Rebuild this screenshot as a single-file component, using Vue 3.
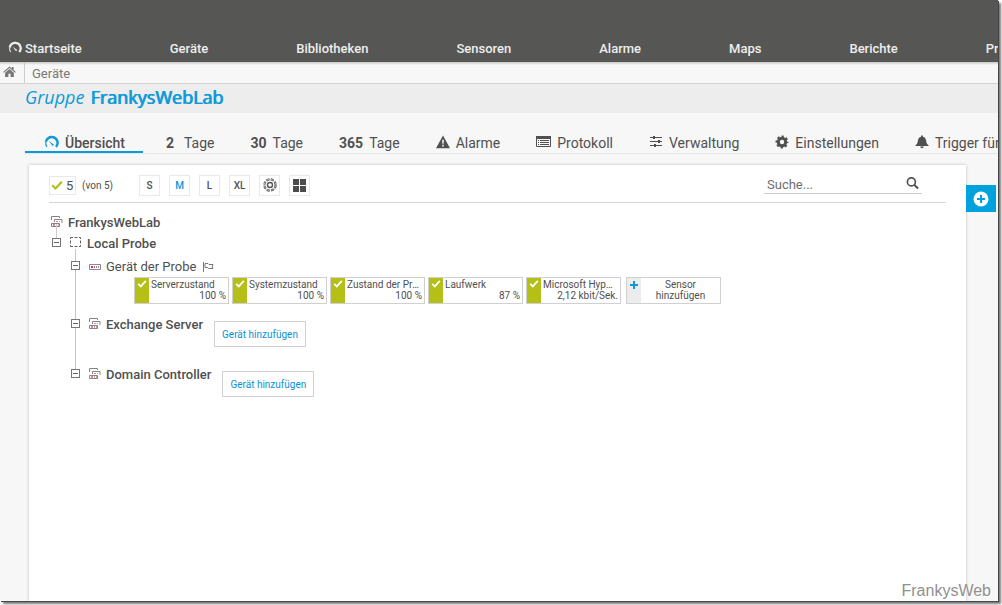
<script setup>
import { ref } from 'vue'

const nav = ['Startseite', 'Geräte', 'Bibliotheken', 'Sensoren', 'Alarme', 'Maps', 'Berichte', 'Protokolle']
const tabs = [
  { icon: 'gauge', label: 'Übersicht', active: true },
  { num: '2', label: 'Tage' },
  { num: '30', label: 'Tage' },
  { num: '365', label: 'Tage' },
  { icon: 'warn', label: 'Alarme' },
  { icon: 'log', label: 'Protokoll' },
  { icon: 'sliders', label: 'Verwaltung' },
  { icon: 'gear', label: 'Einstellungen' },
  { icon: 'bell', label: 'Trigger für Benachrichtigungen' }
]
const sizes = ['S', 'M', 'L', 'XL']
const size = ref('M')
const sensors = [
  { name: 'Serverzustand', value: '100 %' },
  { name: 'Systemzustand', value: '100 %' },
  { name: 'Zustand der Prozesse', value: '100 %' },
  { name: 'Laufwerk', value: '87 %' },
  { name: 'Microsoft Hyper-V', value: '2,12 kbit/Sek.' }
]
const groups = ['Exchange Server', 'Domain Controller']
const search = ref('')
</script>

<template>
  <svg class="defs" aria-hidden="true">
    <symbol id="gauge" viewBox="0 0 16 16">
      <path d="M3.2 12.8A6.3 6.3 0 0 1 2 7.4" fill="none" stroke="currentColor" stroke-width="1.2" />
      <path d="M2 7.4A6.2 6.2 0 0 1 9 2.2a6.2 6.2 0 0 1 3.8 10.4" fill="none" stroke="currentColor" stroke-width="2.6" />
      <path d="M5 6.2l5.6 4.2-1.4 1.4z" fill="currentColor" />
    </symbol>
    <symbol id="warn" viewBox="0 0 16 16">
      <path fill="currentColor" fill-rule="evenodd" d="M8 .5l8 14.500H0zM7 5.400l.3 4.600h1.400L9 5.400zM7.100 11.200v1.800h1.800v-1.800z" />
    </symbol>
    <symbol id="log" viewBox="0 0 15 14">
      <path fill="none" stroke="currentColor" d="M.5 1.500h14v10H.5z" />
      <path fill="currentColor" d="M0 1h15v3H0zM2 5h1v1H2zM4 5h9v1H4zM2 7h1v1H2zM4 7h9v1H4zM2 9h1v1H2zM4 9h9v1H4z" />
    </symbol>
    <symbol id="sliders" viewBox="0 0 14 14">
      <path fill="currentColor" d="M1 2h12v1H1zM1 6h12v1H1zM1 10h12v1H1zM4 1h2v3H4zM9 5h2v3H9zM5 9h2v3H5z" />
    </symbol>
    <symbol id="gear" viewBox="0 0 16 16">
      <circle cx="8" cy="8" r="4.200" fill="none" stroke="currentColor" stroke-width="3.400" />
      <circle cx="8" cy="8" r="6.200" fill="none" stroke="currentColor" stroke-width="2.400" stroke-dasharray="2.600 2.270" stroke-dashoffset="1.300" />
    </symbol>
    <symbol id="bell" viewBox="0 0 16 16">
      <path fill="currentColor" d="M7 .5h2v1.400c2.500.6 3.600 2.600 3.800 5 .2 2.600 1.200 4 3.200 5.600H0c2-1.600 3-3 3.200-5.600.2-2.400 1.300-4.400 3.800-5zM6 13.200h4a2 2 0 0 1-4 0z" />
    </symbol>
    <symbol id="home" viewBox="0 0 14 12">
      <path fill="currentColor" d="M7 .5l2.700 2.300V1h1.800v3.400L14 6.600l-.8.8L7 2.200.8 7.400 0 6.600zM7 3.400l4.800 4V12H8.200V8.500H5.800V12H2.200V7.400z" />
    </symbol>
    <symbol id="check" viewBox="0 0 12 10">
      <path fill="none" stroke="currentColor" stroke-width="2.200" d="M1.200 4.800l3.300 3.200L10.800 1.200" />
    </symbol>
    <symbol id="group" viewBox="0 0 12 12">
      <path fill="none" stroke="#858587" d="M.5 5V1.500M.5 1.500h8V3M3.500 7V4.500h7.500v3.500M.5 11.500v-3h8v3z" />
      <path fill="#e57fae" d="M5 6h2v1H5zM2 9h2v2H2z" />
      <path fill="#c9a3b4" d="M8 6h1v1H8zM5 9h1v2H5zM7 9h1v2H7z" />
    </symbol>
    <symbol id="device" viewBox="0 0 12 6">
      <path fill="#fff" stroke="#8a8a8c" d="M.5.500h11v5H.5z" />
      <path fill="#e2206f" d="M2 2h2v2H2z" />
      <path fill="#b07a90" d="M5 2h1v2H5zM7 2h1v2H7zM9 2h1v2H9z" />
    </symbol>
    <symbol id="probe" viewBox="0 0 12 12">
      <path fill="none" stroke="#666" d="M.5 3V1.500H3M4.500 1.500h3M9 1.500h1.500V3M10.500 4.500v3M10.500 9v1.500H9M7.500 10.500h-3M3 10.500H.5V9M.5 7.500v-3" />
    </symbol>
  </svg>

  <div class="window">
    <nav class="top">
      <a v-for="(n, i) in nav" :key="n" href="#">
        <svg v-if="i === 0" class="logo"><use href="#gauge" /></svg>{{ n }}
      </a>
    </nav>

    <div class="crumbs">
      <a class="home" href="#" aria-label="Startseite"><svg><use href="#home" /></svg></a>
      <a class="crumb" href="#">Geräte</a>
    </div>

    <h1><i>Gruppe</i> <span>FrankysWebLab</span></h1>

    <div class="tabs">
      <a v-for="(t, i) in tabs" :key="i" href="#" :class="{ active: t.active }">
        <svg v-if="t.icon" :class="t.icon"><use :href="'#' + t.icon" /></svg>
        <b v-else>{{ t.num }}</b>
        <span>{{ t.label }}</span>
      </a>
    </div>

    <div class="body">
      <main class="card">
        <div class="toolbar">
          <button class="count"><svg><use href="#check" /></svg>5</button>
          <span class="of">(von 5)</span>
          <div class="sizes">
            <button v-for="s in sizes" :key="s" :class="{ on: s === size }" @click="size = s">{{ s }}</button>
            <button aria-label="Kreisansicht">
              <svg viewBox="0 0 14 14">
                <circle cx="7" cy="7" r="2.500" fill="none" stroke="#555" stroke-width="1.400" />
                <circle cx="7" cy="7" r="5.600" fill="none" stroke="#555" stroke-width="2.200" stroke-dasharray="3.200 1.198" />
                <circle cx="7" cy="7" r="5.600" fill="none" stroke="#fff" stroke-width=".6" stroke-dasharray="2 2.398" stroke-dashoffset="-.6" />
              </svg>
            </button>
            <button aria-label="Kachelansicht">
              <svg viewBox="0 0 14 14"><path fill="#4c4c4c" d="M0 1h6v6H0zM7 1h6v6H7zM0 8h6v6H0zM7 8h6v6H7z" /></svg>
            </button>
          </div>
          <label class="search">
            <input v-model="search" type="text" placeholder="Suche..." aria-label="Suche" />
            <svg viewBox="0 0 14 14">
              <circle cx="5.800" cy="5.800" r="4.300" fill="none" stroke="currentColor" stroke-width="1.800" />
              <path d="M9 9l4 4" stroke="currentColor" stroke-width="2.200" />
            </svg>
          </label>
        </div>

        <div class="tree">
          <div class="row root"><svg class="ico"><use href="#group" /></svg><span>FrankysWebLab</span></div>
          <div class="row local">
            <button class="toggle" aria-label="Zuklappen"></button>
            <svg class="ico"><use href="#probe" /></svg><span>Local Probe</span>
          </div>
          <ul>
            <li class="probe">
              <div class="row light">
                <button class="toggle" aria-label="Zuklappen"></button>
                <svg class="ico device"><use href="#device" /></svg><span>Gerät der Probe</span>
                <svg class="flag" viewBox="0 0 12 10">
                  <path fill="none" stroke="#777" d="M1.500 0v10M3 1.500h3l1 1h4L10 5l1 1.500H6.500l-1-1H3z" />
                </svg>
              </div>
              <div class="tiles">
                <a v-for="s in sensors" :key="s.name" class="tile" href="#">
                  <span class="state"><svg><use href="#check" /></svg></span>
                  <span class="info"><span class="name">{{ s.name }}</span><span class="value">{{ s.value }}</span></span>
                </a>
                <button class="tile add">
                  <span class="state"><svg viewBox="0 0 8 8"><path fill="currentColor" d="M3 0h2v3h3v2H5v3H3V5H0V3h3z" /></svg></span>
                  <span class="info">Sensor<br />hinzufügen</span>
                </button>
              </div>
            </li>
            <li v-for="g in groups" :key="g" class="group">
              <div class="row">
                <button class="toggle" aria-label="Zuklappen"></button>
                <svg class="ico"><use href="#group" /></svg><span>{{ g }}</span>
              </div>
              <button class="add-device">Gerät hinzufügen</button>
            </li>
          </ul>
        </div>
      </main>
      <button class="plus" aria-label="Hinzufügen">
        <svg viewBox="0 0 16 16">
          <circle cx="8" cy="8" r="7.500" fill="#fff" />
          <path fill="#00a2de" d="M7 4h2v3h3v2H9v3H7V9H4V7h3z" />
        </svg>
      </button>
    </div>
    <div class="mark">FrankysWeb</div>
  </div>
</template>

<style>
body {
  background: #fff;
  overflow: hidden;
}
#app {
  box-sizing: border-box;
  height: 100vh;
  padding: 0 4px 4px 0;
}
</style>

<style scoped>
* {
  box-sizing: border-box;
}
.defs {
  position: absolute;
  width: 0;
  height: 0;
}
.window {
  position: relative;
  display: flex;
  flex-direction: column;
  height: 100%;
  background: #f7f7f7;
  box-shadow: 1px 1px 0 #484848, 3px 3px 2px #777;
  font-family: Roboto, "Liberation Sans", sans-serif;
  font-size: 13px;
  color: #505050;
}
a {
  color: inherit;
  text-decoration: none;
}
button {
  margin: 0;
  padding: 0;
  border: 0;
  background: none;
  font: inherit;
  color: inherit;
}
svg {
  flex: none;
  display: block;
}
.top {
  display: flex;
  align-items: flex-end;
  gap: 88px;
  flex: none;
  padding: 41px 0 5px 8px;
  overflow: hidden;
  background: #565654;
  color: #eee;
  font-weight: 500;
  line-height: 16px;
  white-space: nowrap;
}
.top a {
  display: flex;
  gap: 3px;
}
.logo {
  width: 14px;
  height: 14px;
}
.crumbs {
  display: flex;
  flex: none;
  height: 22px;
  border-bottom: 1px solid #d4d4d4;
  background: linear-gradient(#c8c8c8, #f7f7f7 3px);
  color: #777;
}
.home {
  width: 25px;
  padding: 4px 3px;
  border-right: 1px solid #ccc;
}
.home svg {
  width: 13px;
  height: 11px;
}
.crumb {
  padding-left: 7px;
  line-height: 23px;
}
h1 {
  flex: none;
  margin: 0;
  padding: 0 0 2px 25px;
  background: #ededed;
  color: #0c9ad8;
  font: 400 18px/27px "Open Sans", sans-serif;
}
h1 i {
  margin-right: 1px;
}
h1 span {
  text-shadow: 1px 0 0 #0c9ad8;
}
.tabs {
  display: flex;
  flex: none;
  margin-left: 25px;
  padding-top: 22px;
  overflow: hidden;
  border-bottom: 1px solid #e6e6e6;
  font-size: 14px;
  line-height: 16px;
  white-space: nowrap;
}
.tabs a {
  display: flex;
  flex: none;
  gap: 6px;
  padding: 0 18px;
  border-bottom: 2px solid transparent;
}
.tabs b {
  min-width: 12px;
}
.tabs .active {
  margin-right: 5px;
  padding-left: 19px;
  border-color: #0c9ad8;
  font-weight: 500;
}
.tabs svg {
  width: 14px;
  height: 14px;
}
.tabs .gauge {
  width: 15px;
  height: 15px;
  color: #0c9ad8;
}
.tabs .log {
  width: 15px;
}
.body {
  display: flex;
  flex: 1;
  align-items: flex-start;
  min-height: 0;
  padding: 11px 2px 0 29px;
  overflow: hidden;
}
.card {
  flex: 1;
  align-self: stretch;
  padding: 0 20px;
  background: #fff;
  box-shadow: 0 0 3px #bbb;
}
.plus {
  position: relative;
  display: grid;
  place-items: center;
  width: 30px;
  height: 27px;
  margin-top: 20px;
  background: #00a2de;
}
.plus svg {
  width: 16px;
  height: 16px;
}
.toolbar {
  display: flex;
  align-items: center;
  height: 38px;
  padding-top: 3px;
  border-bottom: 1px solid #d5d5d5;
}
.count {
  display: flex;
  align-items: center;
  gap: 3px;
  width: 27px;
  height: 19px;
  padding-left: 1px;
  border: 1px solid #e9e9e9;
}
.count svg {
  width: 12px;
  height: 11px;
  color: #b4bf18;
}
.of {
  width: 63px;
  padding-left: 6px;
  font-size: 10px;
}
.sizes {
  display: flex;
  gap: 9px;
}
.sizes button {
  display: grid;
  place-items: center;
  width: 21px;
  height: 21px;
  border: 1px solid #e9e9e9;
  font-size: 10px;
  font-weight: 500;
}
.sizes .on {
  color: #0c9ad8;
}
.sizes svg {
  width: 14px;
  height: 14px;
}
.search {
  display: flex;
  align-items: center;
  width: 158px;
  height: 18px;
  margin: 0 24px 0 auto;
  border-bottom: 1px solid #ccc;
}
.search input {
  width: 142px;
  height: 17px;
  padding: 0 3px;
  border: 0;
  outline: 0;
  background: none;
  font: inherit;
}
.search input::placeholder {
  color: #707070;
}
.search svg {
  width: 13px;
  height: 14px;
  margin-bottom: 3px;
}
.tree {
  padding: 9px 0 0 2px;
}
.row {
  display: flex;
  gap: 5px;
  align-items: center;
  height: 21px;
  font-weight: 500;
}
.row.light {
  font-weight: 400;
}
.ico {
  width: 12px;
  height: 12px;
}
.row .ico {
  margin-bottom: 3px;
}
.row .device {
  height: 6px;
  margin: 0;
}
.toggle {
  position: relative;
  width: 9px;
  height: 9px;
  margin: 0 4px 2px 0;
  border: 1px solid #777;
  background: linear-gradient(#666, #666) center / 5px 1px no-repeat #fff;
}
.local {
  position: relative;
  padding-left: 1px;
}
.local::before {
  content: "";
  position: absolute;
  left: 5px;
  top: -9px;
  width: 1px;
  height: 14px;
  background: #ccc;
}
ul {
  margin: 0;
  padding: 0 0 0 20px;
  list-style: none;
}
li {
  position: relative;
}
li::before {
  content: "";
  position: absolute;
  left: 4px;
  top: -5px;
  bottom: 0;
  width: 1px;
  background: #c4c4c4;
}
li:last-child::before {
  bottom: auto;
  height: 12px;
}
.probe {
  padding: 2px 0 10px;
}
.group {
  display: flex;
  align-items: flex-start;
  gap: 11px;
  height: 50px;
}
.flag {
  width: 12px;
  height: 10px;
  margin-left: 1px;
}
.tiles {
  display: flex;
  gap: 3px;
  padding-left: 63px;
}
.tile {
  display: flex;
  width: 95px;
  height: 27px;
  border: 1px solid #d0d0d0;
  font-size: 10px;
  line-height: 11px;
  text-align: left;
}
.state {
  flex: none;
  align-self: stretch;
  width: 14px;
  padding: 2px 2px 0;
  background: #b4bf18;
  color: #fff;
}
.state svg {
  width: 10px;
  height: 8px;
}
.info {
  flex: 1;
  min-width: 0;
  padding: 1px 2px 0;
}
.name,
.value {
  display: block;
  overflow: hidden;
  white-space: nowrap;
  text-overflow: ellipsis;
}
.name {
  margin-right: 2px;
}
.value {
  text-align: right;
}
.add {
  margin-left: 2px;
  text-align: center;
}
.add .state {
  padding: 3px 3px 0;
  background: #ececec;
  color: #0c9ad8;
}
.add .state svg {
  width: 8px;
  height: 8px;
}
.add-device {
  height: 26px;
  margin-top: 7px;
  padding: 0 7px;
  border: 1px solid #d0d0d0;
  color: #0c8fd0;
  font-size: 10px;
}
.mark {
  position: absolute;
  right: 7px;
  bottom: 1px;
  color: #909090;
  font: 16px/18px "Liberation Sans", sans-serif;
  text-shadow: 1px 1px 0 #fff;
}
</style>
